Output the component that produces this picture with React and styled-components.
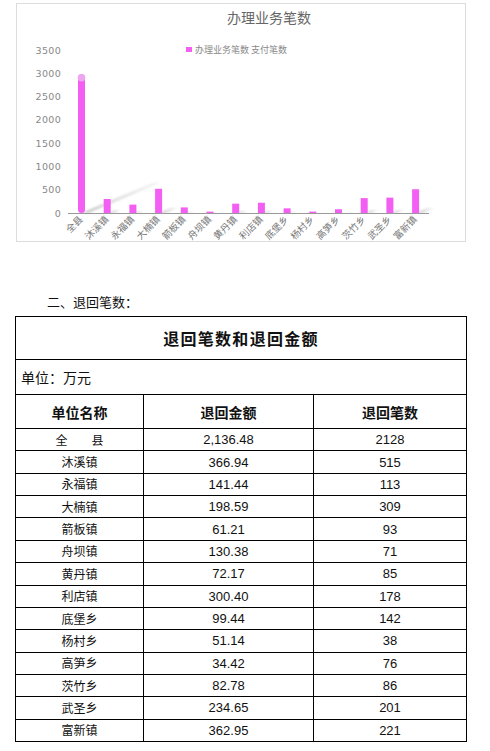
import React from 'react';
import styled, { createGlobalStyle } from 'styled-components';

const Global = createGlobalStyle`
  html, body {
    margin: 0;
    padding: 0;
    background: #fff;
  }
  body {
    font-family: "Liberation Sans", "Noto Sans CJK SC", sans-serif;
    color: #000;
    overflow: hidden;
  }
`;

const Page = styled.div`
  width: 490px;
  height: 751px;
  padding-top: 3px;
  box-sizing: border-box;
`;

// рамка графика
const ChartFrame = styled.div`
  margin-left: 16px;
  width: 450px;
  height: 239px;
  box-sizing: border-box;
  border: 1px solid #dcdcdc;
  background: #fff;
`;

const SectionTitle = styled.div`
  margin: 51px 0 0 47px;
  height: 17px;
  font-size: 13px;
  line-height: 17px;
  font-family: "Noto Sans CJK SC", sans-serif;
  color: #111;
`;

const Table = styled.table`
  margin: 6px 0 0 15px;
  width: 451px;
  border-collapse: collapse;
  table-layout: fixed;
  border: 1px solid #000;
`;

const Cell = styled.td`
  border: 1px solid #000;
  padding: 0;
  text-align: ${(p) => (p.$left ? 'left' : 'center')};
  padding-left: ${(p) => (p.$left ? '5px' : '0')};
  height: ${(p) => p.$h}px;
  font-size: ${(p) => p.$size || 13}px;
  font-weight: ${(p) => (p.$bold ? 700 : 400)};
  letter-spacing: ${(p) => p.$ls || 0}px;
  font-family: ${(p) =>
    p.$cjk ? '"Noto Sans CJK SC", sans-serif' : '"Liberation Sans", "Noto Sans CJK SC", sans-serif'};
  color: #111;
  white-space: nowrap;
  line-height: 1;
`;

const categories = ['全县', '沐溪镇', '永福镇', '大楠镇', '箭板镇', '舟坝镇', '黄丹镇', '利店镇', '底堡乡', '杨村乡', '高笋乡', '茨竹乡', '武圣乡', '富新镇'];
const values = [2980, 300, 180, 520, 120, 30, 200, 220, 100, 30, 80, 320, 330, 510];

const rows = [
  ['全　　县', '2,136.48', '2128'],
  ['沐溪镇', '366.94', '515'],
  ['永福镇', '141.44', '113'],
  ['大楠镇', '198.59', '309'],
  ['箭板镇', '61.21', '93'],
  ['舟坝镇', '130.38', '71'],
  ['黄丹镇', '72.17', '85'],
  ['利店镇', '300.40', '178'],
  ['底堡乡', '99.44', '142'],
  ['杨村乡', '51.14', '38'],
  ['高笋乡', '34.42', '76'],
  ['茨竹乡', '82.78', '86'],
  ['武圣乡', '234.65', '201'],
  ['富新镇', '362.95', '221'],
];

const BASE = 213;
const scale = (v) => (v * (BASE - 50)) / 3500;
const BAR = '#f35ef3';

const Chart = () => (
  <svg width="448" height="237" viewBox="17 4 448 237" style={{ display: 'block' }}>
    <defs>
      <linearGradient id="sh" x1="0" y1="1" x2="1" y2="0">
        <stop offset="0" stopColor="#bdbdbd" stopOpacity="0.9" />
        <stop offset="1" stopColor="#d8d8d8" stopOpacity="0.3" />
      </linearGradient>
      <filter id="blur">
        <feGaussianBlur stdDeviation="1.2" />
      </filter>
    </defs>
    <text x="269" y="23" textAnchor="middle" fontSize="14" fill="#666" fontFamily='"Noto Sans CJK SC", sans-serif'>
      办理业务笔数
    </text>
    <rect x="186" y="47" width="6" height="5" fill={BAR} />
    <text x="195" y="52.5" fontSize="9" fill="#888" fontFamily='"Noto Sans CJK SC", sans-serif'>
      办理业务笔数 支付笔数
    </text>
    {[0, 500, 1000, 1500, 2000, 2500, 3000, 3500].map((t) => (
      <text key={t} x="61" y={BASE - scale(t) + 3.5} textAnchor="end" fontSize="9.5" fill="#888" fontFamily='"DejaVu Sans", sans-serif' letterSpacing="0.3">
        {t}
      </text>
    ))}
    {values.map((v, i) => {
      const cx = 81.5 + 25.7 * i;
      const h = scale(v);
      const dx = h * 0.52;
      const dy = h * 0.22;
      return (
        <polygon
          key={'s' + i}
          points={`${cx},${BASE} ${cx + 7},${BASE} ${cx + 7 + dx},${BASE - dy} ${cx + dx},${BASE - dy}`}
          fill="url(#sh)"
          filter="url(#blur)"
        />
      );
    })}
    <line x1="68" y1={BASE + 0.5} x2="429" y2={BASE + 0.5} stroke="#999" strokeWidth="1" />
    {values.map((v, i) => {
      const cx = 81.5 + 25.7 * i;
      const h = scale(v);
      if (i === 0) {
        return (
          <g key={'b' + i}>
            <rect x={cx - 3.5} y={BASE - h} width="7" height={h} rx="3.5" fill={BAR} />
            <circle cx={cx} cy={BASE - h + 3.5} r="3.8" fill="#eda6ef" />
          </g>
        );
      }
      return <rect key={'b' + i} x={cx - 3.5} y={BASE - h} width="7" height={h} fill={BAR} />;
    })}
    {categories.map((c, i) => {
      const cx = 81.5 + 25.7 * i;
      return (
        <text
          key={'l' + i}
          x={cx + 2}
          y="220"
          textAnchor="end"
          fontSize="9.5"
          fill="#777"
          transform={`rotate(-45 ${cx + 2} 220)`}
          fontFamily='"Noto Sans CJK SC", sans-serif'
        >
          {c}
        </text>
      );
    })}
  </svg>
);

const App = () => (
  <Page>
    <Global />
    <ChartFrame>
      <Chart />
    </ChartFrame>
    <SectionTitle>二、退回笔数：</SectionTitle>
    <Table>
      <colgroup>
        <col style={{ width: 128 }} />
        <col style={{ width: 170 }} />
        <col style={{ width: 153 }} />
      </colgroup>
      <tbody>
        <tr>
          <Cell colSpan={3} $h={42} $size={16} $bold $cjk $ls={1.3}>
            退回笔数和退回金额
          </Cell>
        </tr>
        <tr>
          <Cell colSpan={3} $h={34} $size={14} $left $cjk>
            单位：万元
          </Cell>
        </tr>
        <tr>
          <Cell $h={33} $size={14} $bold $cjk>单位名称</Cell>
          <Cell $h={33} $size={14} $bold $cjk>退回金额</Cell>
          <Cell $h={33} $size={14} $bold $cjk>退回笔数</Cell>
        </tr>
        {rows.map((r) => (
          <tr key={r[0]}>
            <Cell $h={21.36} $size={12} $cjk>{r[0]}</Cell>
            <Cell $h={21.36}>{r[1]}</Cell>
            <Cell $h={21.36}>{r[2]}</Cell>
          </tr>
        ))}
      </tbody>
    </Table>
  </Page>
);

export default App;
